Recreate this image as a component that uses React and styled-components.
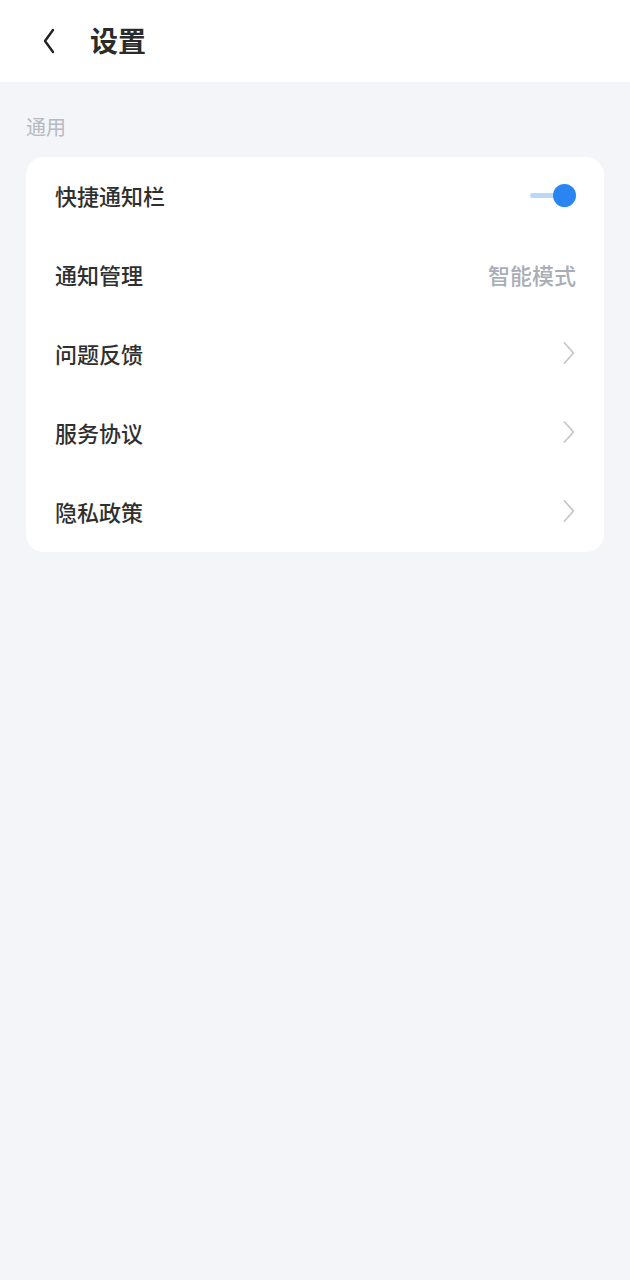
import React from 'react'
import styled, { createGlobalStyle } from 'styled-components'

const GlobalStyle = createGlobalStyle`
    html, body {
        margin: 0;
        padding: 0;
        background: #f4f5f9;
    }
    body {
        font-family: "Noto Sans CJK SC", "Noto Sans", sans-serif;
        -webkit-font-smoothing: antialiased;
    }
`

const rows = [
    { title: '快捷通知栏', type: 'switch', on: true },
    { title: '通知管理', type: 'value', value: '智能模式' },
    { title: '问题反馈', type: 'link' },
    { title: '服务协议', type: 'link' },
    { title: '隐私政策', type: 'link' },
]

const BackIcon = () => (
    <svg width="14" height="26" viewBox="0 0 14 26" fill="none">
        <polyline points="11,2 3,13 11,24" stroke="#222" strokeWidth="2.4" strokeLinecap="round" strokeLinejoin="round" />
    </svg>
)

const ArrowIcon = () => (
    <svg width="14" height="24" viewBox="0 0 14 24" fill="none">
        <polyline points="2.5,2 11.5,12 2.5,22" stroke="#c6c7ca" strokeWidth="1.8" strokeLinecap="round" strokeLinejoin="round" />
    </svg>
)

export default function App() {
    return (
        <Page>
            <GlobalStyle />
            <Header>
                <BackButton><BackIcon /></BackButton>
                <Title>设置</Title>
            </Header>
            <Section>
                <SectionLabel>通用</SectionLabel>
                <Card>
                    {rows.map(row => (
                        <Row key={row.title}>
                            <RowTitle>{row.title}</RowTitle>
                            {row.type === 'switch' && (
                                <Switch $on={row.on}>
                                    <SwitchTrack $on={row.on} />
                                    <SwitchKnob $on={row.on} />
                                </Switch>
                            )}
                            {row.type === 'value' && <RowValue>{row.value}</RowValue>}
                            {row.type === 'link' && <ArrowIcon />}
                        </Row>
                    ))}
                </Card>
            </Section>
        </Page>
    )
}

const Page = styled.div`
    min-height: 1280px;
    background: #f4f5f9;
`

const Header = styled.div`
    height: 82px;
    background: #fff;
    display: flex;
    align-items: center;
    padding-left: 42px;
    box-sizing: border-box;
`

const BackButton = styled.div`
    width: 14px;
    height: 26px;
    display: flex;
    margin-top: -1px;
`

const Title = styled.h1`
    margin: 0 0 0 34px;
    font-size: 28px;
    font-weight: 700;
    color: #2b2b2b;
    line-height: 1;
    margin-top: -2px;
`

const Section = styled.div`
    padding: 30px 26px 0;
`

const SectionLabel = styled.div`
    font-size: 20px;
    line-height: 30px;
    color: #b6bac1;
    margin-bottom: 15px;
`

const Card = styled.div`
    background: #fff;
    border-radius: 18px;
    overflow: hidden;
`

const Row = styled.div`
    height: 79px;
    display: flex;
    align-items: center;
    justify-content: space-between;
    padding: 0 28px 3px 29px;
    box-sizing: border-box;
`

const RowTitle = styled.span`
    font-size: 22px;
    font-weight: 500;
    color: #2f2f2f;
`

const RowValue = styled.span`
    font-size: 22px;
    font-weight: 500;
    color: #a9aeb6;
`

const Switch = styled.div`
    width: 46px;
    height: 24px;
    display: flex;
    align-items: center;
    justify-content: ${p => (p.$on ? 'flex-end' : 'flex-start')};
    position: relative;
`

const SwitchTrack = styled.div`
    position: absolute;
    left: 0;
    right: 12px;
    top: 50%;
    height: 5px;
    margin-top: -2px;
    border-radius: 3px;
    background: ${p => (p.$on ? '#bcd8f7' : '#dcdfe4')};
`

const SwitchKnob = styled.div`
    position: relative;
    width: 23px;
    height: 23px;
    border-radius: 50%;
    background: ${p => (p.$on ? '#2a85f3' : '#fff')};
`
